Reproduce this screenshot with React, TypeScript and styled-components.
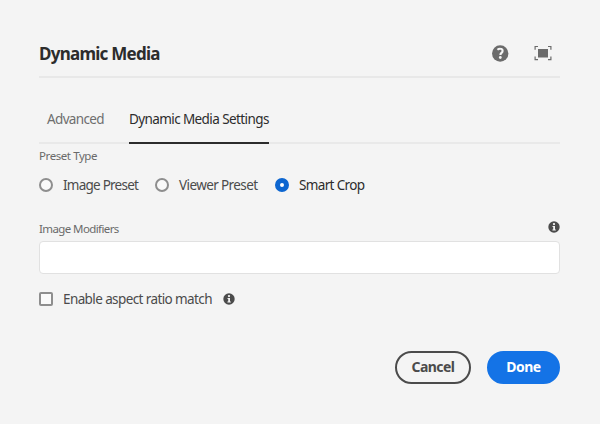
import React from "react";
import styled, { createGlobalStyle } from "styled-components";

const GlobalStyle = createGlobalStyle`
  * { box-sizing: border-box; }
  body { margin: 0; background: #f4f4f4; }
`;

const Dialog = styled.main`
  width: 600px;
  height: 424px;
  padding: 29px 40px 40px 39px;
  display: flex;
  flex-direction: column;
  background: #f4f4f4;
  color: #4b4b4b;
  font-family: "Noto Sans", "Open Sans", sans-serif;
  font-size: 13.5px;
  white-space: nowrap;
`;

const Header = styled.header`
  height: 49px;
  display: flex;
  align-items: center;
  justify-content: space-between;
  padding-top: 2px;
  border-bottom: 2px solid #e8e8e8;
`;

const Title = styled.h1`
  margin: 1px 0 0;
  color: #2c2c2c;
  font-size: 17px;
  font-weight: 700;
  line-height: 24px;
  letter-spacing: -0.75px;
`;

const Actions = styled.div`
  display: flex;
  align-items: center;
  gap: 25px;
  padding-right: 8px;
  color: #6b6b6b;
  svg { display: block; }
`;

const Tabs = styled.nav`
  height: 66px;
  display: flex;
  align-items: stretch;
  gap: 25px;
  padding-left: 8px;
  border-bottom: 2px solid #e9e9e9;
`;

const Tab = styled.div<{ $active?: boolean; $track: number }>`
  height: 66px;
  padding-top: 31px;
  line-height: 20px;
  letter-spacing: ${(p) => p.$track}px;
  color: ${(p) => (p.$active ? "#2c2c2c" : "#6e6e6e")};
  border-bottom: 2px solid ${(p) => (p.$active ? "#2c2c2c" : "transparent")};
`;

const FieldLabel = styled.div<{ $track: number }>`
  color: #6a6a6a;
  font-size: 11.5px;
  line-height: 16px;
  letter-spacing: ${(p) => p.$track}px;
`;

const PresetGroup = styled.section`
  padding-top: 4px;
  height: 77px;
`;

const Options = styled.div`
  display: flex;
  height: 20px;
  margin-top: 11px;
`;

const Option = styled.label<{ $width?: number; $track: number; $dark?: boolean }>`
  display: flex;
  align-items: center;
  gap: 10px;
  width: ${(p) => (p.$width ? `${p.$width}px` : "auto")};
  line-height: 20px;
  letter-spacing: ${(p) => p.$track}px;
  color: ${(p) => (p.$dark ? "#2c2c2c" : "#4b4b4b")};
`;

const Radio = styled.span<{ $checked?: boolean }>`
  flex: none;
  width: 14px;
  height: 14px;
  border-radius: 50%;
  background: ${(p) => (p.$checked ? "#fff" : "#f9f9f9")};
  border: ${(p) => (p.$checked ? "5px solid #0d66d0" : "2px solid #8e8e8e")};
`;

const Checkbox = styled.span`
  flex: none;
  width: 14px;
  height: 14px;
  border: 2px solid #8e8e8e;
  border-radius: 2px;
  background: #fafafa;
`;

const LabelRow = styled.div`
  display: flex;
  justify-content: space-between;
  height: 21px;
  padding-top: 1px;
`;

const InfoSlot = styled.span`
  display: flex;
  color: #4b4b4b;
`;

const TextInput = styled.input`
  display: block;
  width: 521px;
  height: 33px;
  padding: 0 10px;
  border: 1px solid #e1e1e1;
  border-radius: 4px;
  background: #fff;
  outline: none;
`;

const CheckRow = styled.div`
  display: flex;
  align-items: center;
  height: 20px;
  margin-top: 15px;
  gap: 11px;
`;

const Footer = styled.footer`
  display: flex;
  justify-content: flex-end;
  gap: 16px;
  margin-top: 42px;
`;

const Button = styled.button<{ $primary?: boolean }>`
  width: ${(p) => (p.$primary ? 73 : 76)}px;
  height: 33px;
  padding: 0;
  border: 2px solid ${(p) => (p.$primary ? "#1473e6" : "#4b4b4b")};
  border-radius: 17px;
  background: ${(p) => (p.$primary ? "#1473e6" : "transparent")};
  color: ${(p) => (p.$primary ? "#fff" : "#4b4b4b")};
  font: 700 14px/20px "Noto Sans", "Open Sans", sans-serif;
  letter-spacing: -0.55px;
`;

const HelpIcon = () => (
  <svg width="17" height="17" viewBox="0 0 17 17">
    <circle cx="8.2" cy="8.5" r="8.2" fill="currentColor" />
    <path d="M5.4 4.8C6.4 4 7.4 3.7 8.4 3.8c1.4.1 2.2.9 2.2 2.1 0 2-2.2 2-2.2 4" fill="none" stroke="#f4f4f4" strokeWidth="2.1" />
    <circle cx="8.3" cy="12.5" r="1.4" fill="#f4f4f4" />
  </svg>
);

const FullScreenIcon = () => (
  <svg width="18" height="16" viewBox="0 0 18 16">
    <rect x="4" y="4" width="10" height="8.5" fill="currentColor" />
    <path d="M1.1 4.7V1.5H4M14 1.5h2.9V4.7M16.9 11.5v3.2H14M4 14.7H1.1V11.5" fill="none" stroke="currentColor" strokeWidth="1.2" />
  </svg>
);

const InfoIcon = () => (
  <svg width="12" height="12" viewBox="0 0 12 12">
    <circle cx="6" cy="6" r="5.7" fill="currentColor" />
    <circle cx="6" cy="3.1" r="1.15" fill="#f4f4f4" />
    <path d="M4.5 5h2.5v3.4h.8v1.2H4.4V8.4h.8V6.1h-.7z" fill="#f4f4f4" />
  </svg>
);

export default function App() {
  return (
    <>
      <GlobalStyle />
      <Dialog>
        <Header>
          <Title>Dynamic Media</Title>
          <Actions>
            <HelpIcon />
            <FullScreenIcon />
          </Actions>
        </Header>
        <Tabs>
          <Tab $track={-0.65}>Advanced</Tab>
          <Tab $active $track={-0.59}>Dynamic Media Settings</Tab>
        </Tabs>
        <PresetGroup>
          <FieldLabel $track={-0.42}>Preset Type</FieldLabel>
          <Options>
            <Option $width={116} $track={-0.76}><Radio />Image Preset</Option>
            <Option $width={120} $track={-0.6}><Radio />Viewer Preset</Option>
            <Option $track={-0.65} $dark><Radio $checked />Smart Crop</Option>
          </Options>
        </PresetGroup>
        <LabelRow>
          <FieldLabel $track={-0.6}>Image Modifiers</FieldLabel>
          <InfoSlot><InfoIcon /></InfoSlot>
        </LabelRow>
        <TextInput aria-label="Image Modifiers" />
        <CheckRow>
          <Option $track={-0.6}><Checkbox />Enable aspect ratio match</Option>
          <InfoSlot><InfoIcon /></InfoSlot>
        </CheckRow>
        <Footer>
          <Button>Cancel</Button>
          <Button $primary>Done</Button>
        </Footer>
      </Dialog>
    </>
  );
}
